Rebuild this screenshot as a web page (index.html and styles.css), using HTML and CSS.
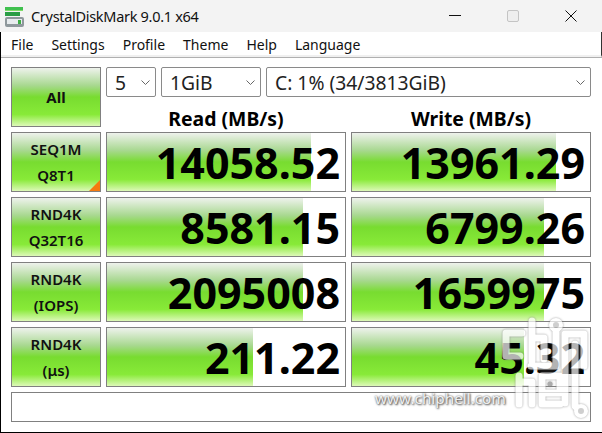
FILE: index.html
```html
<!DOCTYPE html>
<html lang="en">
<head>
    <meta charset="UTF-8">
    <title>CrystalDiskMark 9.0.1 x64</title>
    <link rel="stylesheet" href="styles.css">
</head>
<body>
    <div class="window">
        <div class="titlebar">
            <svg class="app-icon" width="22" height="24" viewBox="0 0 22 24">
                <rect x="1" y="3" width="18" height="3" fill="#3fc04e"/>
                <rect x="1" y="6" width="18" height="1" fill="#7fdc6a"/>
                <rect x="1" y="8" width="15" height="4" fill="#2a9d45"/>
                <rect x="1" y="13" width="19" height="10" rx="2" fill="#8f989c"/>
                <rect x="3" y="15" width="15" height="5" fill="#e8ecee"/>
                <rect x="14" y="16" width="3" height="4" fill="#3cae43"/>
            </svg>
            <span class="title">CrystalDiskMark 9.0.1 x64</span>
            <div class="win-btns">
                <svg class="win-btn" width="12" height="12" viewBox="0 0 12 12"><path d="M0 5.5H12" stroke="#111" stroke-width="1"/></svg>
                <svg class="win-btn" width="12" height="12" viewBox="0 0 12 12"><rect x="0.5" y="0.5" width="11" height="11" rx="1.5" fill="#eee" stroke="#c4c4c4"/></svg>
                <svg class="win-btn" width="12" height="12" viewBox="0 0 12 12"><path d="M0.5 0.5L11.5 11.5M11.5 0.5L0.5 11.5" stroke="#111" stroke-width="1"/></svg>
            </div>
        </div>
        <div class="client">
            <div class="menubar">
                <span>File</span><span>Settings</span><span>Profile</span><span>Theme</span><span>Help</span><span>Language</span>
            </div>
            <div class="main">
                <div class="btn all">All</div>
                <div class="selectors">
                    <div class="combo-row">
                        <div class="combo combo-count">5<svg class="chev" width="9" height="5" viewBox="0 0 9 5"><path d="M0.5 0.5L4.5 4.5L8.5 0.5" fill="none" stroke="#666"/></svg></div>
                        <div class="combo combo-size">1GiB<svg class="chev" width="9" height="5" viewBox="0 0 9 5"><path d="M0.5 0.5L4.5 4.5L8.5 0.5" fill="none" stroke="#666"/></svg></div>
                        <div class="combo combo-drive">C: 1% (34/3813GiB)<svg class="chev" width="9" height="5" viewBox="0 0 9 5"><path d="M0.5 0.5L4.5 4.5L8.5 0.5" fill="none" stroke="#666"/></svg></div>
                    </div>
                    <div class="head-row">
                        <div class="head">Read (MB/s)</div>
                        <div class="head">Write (MB/s)</div>
                    </div>
                </div>

                <div class="btn corner">SEQ1M<br>Q8T1</div>
                <div class="value"><div class="bar" style="width: 204px"></div><span>14058.52</span></div>
                <div class="value"><div class="bar" style="width: 204px"></div><span>13961.29</span></div>

                <div class="btn">RND4K<br>Q32T16</div>
                <div class="value"><div class="bar" style="width: 196px"></div><span>8581.15</span></div>
                <div class="value"><div class="bar" style="width: 192px"></div><span>6799.26</span></div>

                <div class="btn">RND4K<br>(IOPS)</div>
                <div class="value"><div class="bar" style="width: 196px"></div><span>2095008</span></div>
                <div class="value"><div class="bar" style="width: 192px"></div><span>1659975</span></div>

                <div class="btn">RND4K<br>(μs)</div>
                <div class="value"><div class="bar" style="width: 146px"></div><span>211.22</span></div>
                <div class="value"><div class="bar" style="width: 172px"></div><span>45.32</span></div>

                <div class="comment"></div>
            </div>
        </div>

        <div class="watermark">
            <span class="wm-url">www.chiphell.com</span>
            <svg class="wm-logo" width="105" height="117" viewBox="0 0 105 117">
                <g fill="none" stroke="#fff" stroke-width="7" stroke-linecap="round" stroke-linejoin="round">
                    <path d="M25 17H9V40H23"/>
                    <path d="M35 5V45M35 22H47V43"/>
                    <path d="M59 14V50H34"/>
                    <path d="M68 87V18H87V50"/>
                    <path d="M22 88V60M22 66H35V88"/>
                    <path d="M45 88V60H63V77H45M45 88H63"/>
                    <path d="M78 28V90L84 95"/>
                </g>
                <circle cx="59" cy="9" r="5" fill="#bbb" stroke="#fff" stroke-width="4"/>
                <circle cx="84" cy="95" r="5" fill="#bbb" stroke="#fff" stroke-width="4"/>
                <circle cx="53" cy="68" r="2.5" fill="#888"/>
            </svg>
        </div>
    </div>
</body>
</html>
```

FILE: styles.css
```css
* {
    box-sizing: border-box;
}
html, body {
    margin: 0;
    padding: 0;
}
body {
    font-family: "Noto Sans", "Open Sans", sans-serif;
    background: #fff;
    color: #000;
}
.window {
    position: relative;
    width: 602px;
    height: 433px;
    overflow: hidden;
}
.titlebar {
    display: flex;
    align-items: center;
    height: 32px;
    background: #f3f3f3;
    padding-left: 4px;
}
.app-icon {
    margin-right: 5px;
}
.title {
    font-size: 14.5px;
    letter-spacing: -0.3px;
    color: #111;
}
.win-btns {
    display: flex;
    gap: 46px;
    margin-left: auto;
    padding-right: 25px;
}
.client {
    height: 401px;
    border-left: 1px solid #000;
    border-bottom: 1px solid #000;
}
.menubar {
    display: flex;
    gap: 18px;
    height: 25px;
    align-items: center;
    padding: 1px 0 0 10px;
    border-bottom: 2px solid #f0f0f0;
    border-right: 1px solid #333;
    font-size: 14px;
    color: #111;
}
.main {
    display: grid;
    grid-template-columns: 90px 240px 240px;
    grid-template-rows: 60px 60px 60px 60px 60px 30px;
    gap: 5px;
    height: 375px;
    padding: 9px 0 0 10px;
    background: #fff;
    border-top: 1px solid #b0b0b0;
}
.btn {
    display: flex;
    align-items: center;
    justify-content: center;
    text-align: center;
    position: relative;
    border: 1px solid #808080;
    font-size: 15px;
    font-weight: 600;
    line-height: 26px;
    color: #111;
    background: linear-gradient(#eef2ec 0%, #a8d890 30%, #78dc30 50%, #88ea38 80%, #ddf9b8 100%);
}
.btn.all {
    font-weight: 700;
}
.corner::after {
    content: "";
    position: absolute;
    right: 0;
    bottom: 0;
    border-style: solid;
    border-width: 0 0 11px 11px;
    border-color: transparent transparent #f57a10 transparent;
}
.selectors {
    grid-column: 2 / 4;
}
.combo-row {
    display: flex;
    gap: 5px;
    height: 30px;
}
.head-row {
    display: flex;
    gap: 5px;
    height: 30px;
}
.combo {
    display: flex;
    align-items: center;
    justify-content: space-between;
    padding: 0 5px 0 8px;
    border: 1px solid #8a8a8a;
    border-radius: 2px;
    font-size: 19.3px;
    color: #222;
    background: #fff;
}
.combo-count {
    width: 50px;
}
.combo-size {
    width: 100px;
}
.combo-drive {
    width: 325px;
}
.head {
    width: 240px;
    font-size: 19.4px;
    font-weight: 700;
    text-align: center;
    line-height: 44px;
}
.value {
    position: relative;
    border: 1px solid #808080;
    background: #fff;
}
.bar {
    height: 100%;
    background: linear-gradient(#eef2ec 0%, #a8d890 30%, #78dc30 50%, #88ea38 80%, #ddf9b8 100%);
}
.value span {
    position: absolute;
    right: 5px;
    top: 1px;
    font-size: 43px;
    font-weight: 700;
    line-height: 58px;
}
.comment {
    grid-column: 1 / 4;
    border: 1px solid #808080;
}
.watermark {
    position: absolute;
    left: 0;
    top: 0;
    width: 602px;
    height: 433px;
    pointer-events: none;
}
.wm-url {
    position: absolute;
    left: 375px;
    top: 388px;
    font-size: 15.3px;
    color: rgba(255, 255, 255, 0.9);
    text-shadow: 0 0 2px #555, 1px 1px 2px #555;
}
.wm-logo {
    position: absolute;
    left: 497px;
    top: 316px;
    opacity: 0.7;
    filter: drop-shadow(0.5px 0.5px 1px #777);
}
```
